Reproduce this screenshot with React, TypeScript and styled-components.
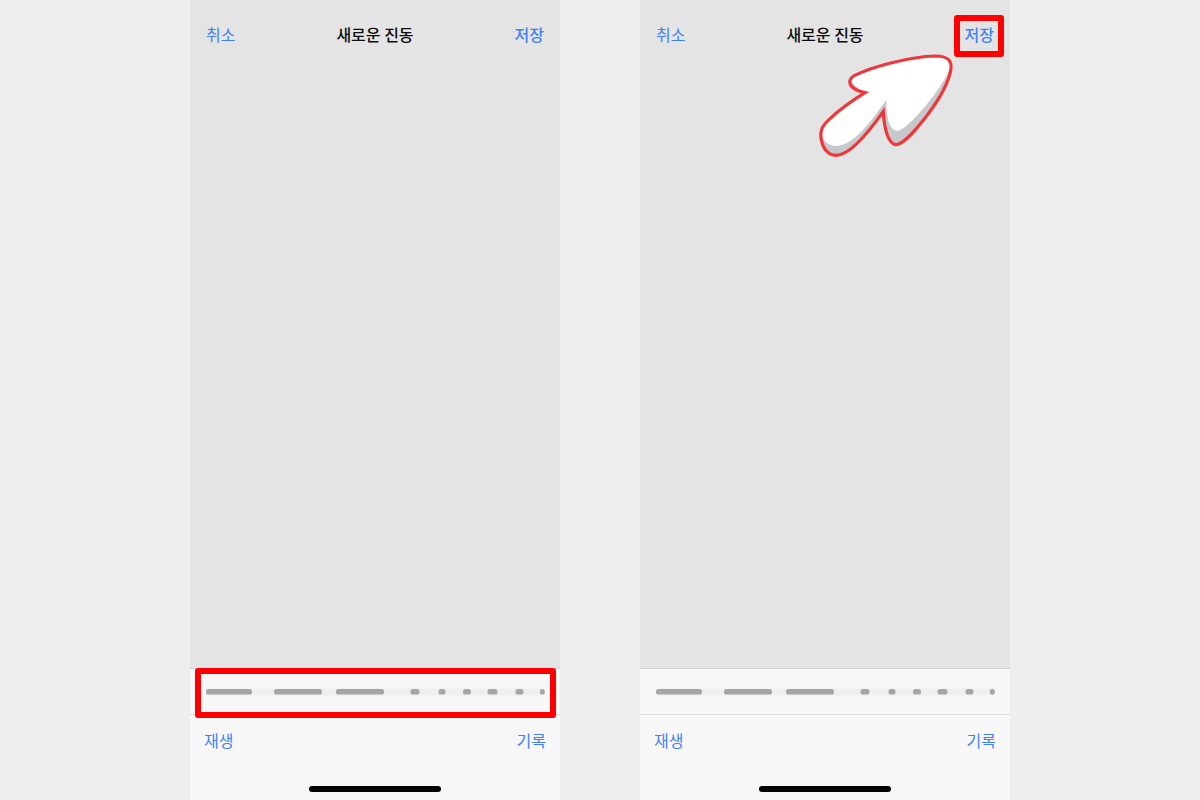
import React from "react";
import styled, { createGlobalStyle } from "styled-components";

const GlobalStyle = createGlobalStyle`
  * { box-sizing: border-box; }
  body {
    margin: 0;
    background: #eeeeee;
    font-family: "Noto Sans CJK KR", "Noto Sans", sans-serif;
  }
`;

const Page = styled.main`
  display: flex;
  justify-content: center;
  gap: 80px;
  min-height: 100vh;
`;

const Phone = styled.section`
  display: flex;
  flex-direction: column;
  flex: 0 1 370px;
  min-width: 0;
  background: #e4e4e4;
`;

const NavBar = styled.header`
  position: relative;
  display: grid;
  grid-template-columns: 1fr auto 1fr;
  align-items: center;
  height: 68px;
  padding: 0 16px;
`;

const Title = styled.h1`
  margin: 0;
  font-size: 16px;
  line-height: 24px;
  font-weight: 500;
  color: #0c0c0c;
`;

const TextButton = styled.button<{ $strong?: boolean; $end?: boolean }>`
  justify-self: ${(p) => (p.$end ? "end" : "start")};
  padding: 0;
  border: 0;
  background: none;
  font-family: inherit;
  font-size: 16px;
  line-height: 24px;
  font-weight: ${(p) => (p.$strong ? 500 : 400)};
  color: #4381f0;
  cursor: pointer;
`;

const TouchArea = styled.div`
  flex: 1;
`;

const Timeline = styled.div`
  position: relative;
  display: flex;
  align-items: center;
  height: 47px;
  padding: 0 15px;
  background: #f7f7f7;
  border-top: 1px solid #d0d0d0;
  border-bottom: 1px solid #dcdcdc;
`;

const Wave = styled.svg`
  display: block;
  width: 100%;
  height: 8px;
`;

const Toolbar = styled.footer`
  display: flex;
  flex-direction: column;
  justify-content: space-between;
  height: 85px;
  padding: 13px 14px 8px;
  background: #f7f7f7;
`;

const Actions = styled.div`
  display: flex;
  justify-content: space-between;
`;

const HomeIndicator = styled.div`
  align-self: center;
  width: 132px;
  height: 6px;
  border-radius: 3px;
  background: #000000;
`;

const Highlight = styled.div`
  position: absolute;
  border: 6px solid #ff0000;
  border-radius: 3px;
  pointer-events: none;
`;

const TimelineHighlight = styled(Highlight)`
  inset: -1px 4px -4px 5px;
`;

const SaveHighlight = styled(Highlight)`
  top: 15px;
  right: 6px;
  width: 50px;
  height: 42px;
`;

const Pointer = styled.svg`
  position: absolute;
  top: 50px;
  right: 54px;
  width: 140px;
  height: 110px;
  pointer-events: none;
`;

const pulses: [number, number][] = [
  [1, 46],
  [69, 48],
  [131, 48],
  [205.5, 9],
  [233.5, 7],
  [258, 8],
  [282.5, 10],
  [310.5, 8],
  [334.8, 5],
];

const outline =
  "M195 278C155 303 115 332 88 358C66 378 60 392 63 414C67 445 84 466 108 466C150 466 205 398 250 334C252 378 262 434 290 434C318 434 425 305 449 225C460 188 452 168 405 168C330 170 215 200 163 227C144 238 147 254 160 264C169 271 180 275 195 278Z";

function PulseTrack() {
  return (
    <Wave viewBox="0 0 340 8" preserveAspectRatio="none" aria-hidden="true">
      <rect x="1" y="0.5" width="339" height="7" rx="3" fill="#efefef" />
      {pulses.map(([x, width]) => (
        <rect key={x} x={x} y="1" width={width} height="5.6" rx="2.6" fill="#a5a5a5" />
      ))}
    </Wave>
  );
}

function PointerArrow() {
  return (
    <Pointer viewBox="48 150 420 330" aria-hidden="true">
      <path d={outline} fill="#c7c8ca" />
      <path
        d="M199 277C155 303 115 332 88 358C70 376 64 386 65 400C68 422 84 438 108 438C160 438 215 362 259 299C259 345 266 392 293 392C325 392 448 240 451 195C456 178 440 168 405 168C330 170 215 200 163 227C152 233 150 239 154 245C166 259 180 271 199 277Z"
        fill="#ffffff"
      />
      <path d={outline} fill="none" stroke="#ee363b" strokeWidth="9.5" />
    </Pointer>
  );
}

function VibrationScreen({ step }: { step: "record" | "save" }) {
  return (
    <Phone>
      <NavBar>
        <TextButton type="button">취소</TextButton>
        <Title>새로운 진동</Title>
        <TextButton type="button" $strong $end>
          저장
        </TextButton>
        {step === "save" && (
          <>
            <SaveHighlight />
            <PointerArrow />
          </>
        )}
      </NavBar>
      <TouchArea />
      <Timeline>
        <PulseTrack />
        {step === "record" && <TimelineHighlight />}
      </Timeline>
      <Toolbar>
        <Actions>
          <TextButton type="button">재생</TextButton>
          <TextButton type="button">기록</TextButton>
        </Actions>
        <HomeIndicator />
      </Toolbar>
    </Phone>
  );
}

export default function App() {
  return (
    <>
      <GlobalStyle />
      <Page>
        <VibrationScreen step="record" />
        <VibrationScreen step="save" />
      </Page>
    </>
  );
}
